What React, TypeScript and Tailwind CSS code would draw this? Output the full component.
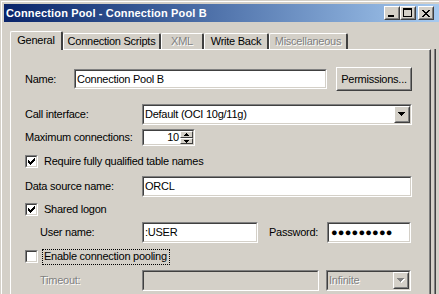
import type { ReactNode } from 'react'

const face = "font-['Liberation_Sans',Arial,sans-serif]"
const grayText = 'text-[#808080] [text-shadow:1px_1px_0_#ffffff]'

// tiny pixel-art helper for the classic glyphs (check mark, close X)
function Pixels({ rows, color = '#000' }: { rows: string[]; color?: string }) {
  const w = rows[0].length
  const h = rows.length
  return (
    <svg width={w} height={h} viewBox={`0 0 ${w} ${h}`} shapeRendering="crispEdges" className="block">
      {rows.flatMap((r, y) =>
        r.split('').map((c, x) => (c === '#' ? <rect key={`${x}-${y}`} x={x} y={y} width={1} height={1} fill={color} /> : null))
      )}
    </svg>
  )
}

const checkRows = ['......#', '.....##', '#...###', '##.###.', '#####..', '.###...', '..#....']
const closeRows = ['##....##', '.##..##.', '..####..', '...##...', '..####..', '.##..##.', '##....##']

function Sunken({ className = '', children, disabled }: { className?: string; children?: ReactNode; disabled?: boolean }) {
  return (
    <div className={`shrink-0 border border-t-[#808080] border-l-[#808080] border-b-white border-r-white ${className}`}>
      <div
        className={`h-full border border-t-[#404040] border-l-[#404040] border-b-[#d4d0c8] border-r-[#d4d0c8] flex items-center ${
          disabled ? 'bg-[#d4d0c8]' : 'bg-white'
        }`}
      >
        {children}
      </div>
    </div>
  )
}

function Raised({ className = '', children }: { className?: string; children?: ReactNode }) {
  return (
    <div className={`shrink-0 border border-t-white border-l-white border-b-[#404040] border-r-[#404040] ${className}`}>
      <div className="h-full border border-t-[#d4d0c8] border-l-[#d4d0c8] border-b-[#808080] border-r-[#808080] flex items-center justify-center bg-[#d4d0c8]">
        {children}
      </div>
    </div>
  )
}

function Arrow({ disabled }: { disabled?: boolean }) {
  return (
    <svg width="8" height="5" viewBox="0 0 8 5" shapeRendering="crispEdges" className="block">
      {disabled && <polygon points="1,1 8,1 4.5,5" fill="#ffffff" />}
      <polygon points="0,0 7,0 3.5,4" fill={disabled ? '#808080' : '#000'} />
    </svg>
  )
}

function Checkbox({ checked }: { checked?: boolean }) {
  return (
    <Sunken className="w-[13px] h-[13px]">
      <div className="w-full h-full flex items-center justify-center">{checked && <Pixels rows={checkRows} />}</div>
    </Sunken>
  )
}

function Tab({ label, w, active, disabled }: { label: string; w: string; active?: boolean; disabled?: boolean }) {
  return (
    <div
      className={`${w} shrink-0 flex items-center justify-center rounded-t-[2px] border-t border-l border-r-2 border-t-white border-l-white border-r-[#404040] bg-[#d4d0c8] ${
        active ? 'h-[19px] -mb-px relative z-10 pb-[2px]' : 'h-[16px]'
      } ${disabled ? grayText : ''}`}
    >
      {label}
    </div>
  )
}

export default function App() {
  return (
    <div className={`w-[439px] h-[294px] overflow-hidden bg-[#d4d0c8] text-black text-[11px] leading-[13px] tracking-[-0.25px] ${face}`}>
      <div className="h-full pt-px pl-px">
        <div className="h-full border-t border-l border-white pt-[2px] pl-[2px] flex flex-col">
          {/* Title bar */}
          <div className="h-[18px] shrink-0 flex items-center bg-gradient-to-r from-[#0a246a] to-[#a6caf0] pl-[2px] pr-[5px]">
            <span className="font-bold text-white tracking-[0.15px]">Connection Pool - Connection Pool B</span>
            <div className="ml-auto flex">
              <Raised className="w-[16px] h-[14px]">
                <svg width="12" height="10" viewBox="0 0 12 10" shapeRendering="crispEdges">
                  <rect x="2" y="7" width="6" height="2" fill="#000" />
                </svg>
              </Raised>
              <Raised className="w-[16px] h-[14px]">
                <svg width="12" height="10" viewBox="0 0 12 10" shapeRendering="crispEdges">
                  <rect x="1" y="0" width="9" height="2" fill="#000" />
                  <rect x="1" y="0" width="1" height="9" fill="#000" />
                  <rect x="9" y="0" width="1" height="9" fill="#000" />
                  <rect x="1" y="8" width="9" height="1" fill="#000" />
                </svg>
              </Raised>
              <Raised className="w-[16px] h-[14px] ml-[2px]">
                <Pixels rows={closeRows} />
              </Raised>
            </div>
          </div>

          {/* Body */}
          <div className="flex-1 flex pt-[9px]">
            <div className="ml-[6px] w-[421px] shrink-0 flex flex-col">
              {/* Tabs */}
              <div className="h-[18px] flex items-end">
                <Tab label="General" w="w-[53px]" active />
                <Tab label="Connection Scripts" w="w-[98px]" />
                <Tab label="XML" w="w-[43px]" disabled />
                <Tab label="Write Back" w="w-[65px]" />
                <Tab label="Miscellaneous" w="w-[79px]" disabled />
              </div>

              {/* Panel */}
              <div className="flex-1 border-t border-l border-r border-t-white border-l-white border-r-[#404040]">
                <div className="h-full border-r border-[#808080] pl-[14px] pt-[17px] flex flex-col">
                  <div className="h-[24px] flex items-center">
                    <span className="w-[49px] shrink-0">Name:</span>
                    <Sunken className="w-[253px] h-[20px]">
                      <span className="pl-[1px]">Connection Pool B</span>
                    </Sunken>
                    <Raised className="ml-[9px] w-[76px] h-[24px]">Permissions...</Raised>
                  </div>

                  <div className="mt-[13px] h-[21px] flex items-center">
                    <span className="w-[117px] shrink-0">Call interface:</span>
                    <Sunken className="w-[270px] h-[21px]">
                      <span className="pl-[1px] flex-1">Default (OCI 10g/11g)</span>
                      <Raised className="w-[16px] h-[17px]">
                        <Arrow />
                      </Raised>
                    </Sunken>
                  </div>

                  <div className="mt-[4px] h-[17px] flex items-center">
                    <span className="w-[117px] shrink-0">Maximum connections:</span>
                    <Sunken className="w-[53px] h-[17px]">
                      <span className="flex-1 text-right pr-[1px]">10</span>
                      <div className="w-[13px] h-full flex flex-col">
                        <div className="h-[7px] border border-t-white border-l-white border-b-[#404040] border-r-[#404040] bg-[#d4d0c8] flex items-center justify-center">
                          <svg width="5" height="3" viewBox="0 0 5 3" shapeRendering="crispEdges" className="block">
                            <polygon points="2.5,0 5,3 0,3" fill="#000" />
                          </svg>
                        </div>
                        <div className="h-[6px] border border-t-white border-l-white border-b-[#404040] border-r-[#404040] bg-[#d4d0c8] flex items-center justify-center">
                          <svg width="5" height="3" viewBox="0 0 5 3" shapeRendering="crispEdges" className="block">
                            <polygon points="0,0 5,0 2.5,3" fill="#000" />
                          </svg>
                        </div>
                      </div>
                    </Sunken>
                  </div>

                  <div className="mt-[9px] h-[13px] flex items-center">
                    <Checkbox checked />
                    <span className="ml-[6px]">Require fully qualified table names</span>
                  </div>

                  <div className="mt-[8px] h-[21px] flex items-center">
                    <span className="w-[117px] shrink-0">Data source name:</span>
                    <Sunken className="w-[270px] h-[21px]">
                      <span className="pl-[1px]">ORCL</span>
                    </Sunken>
                  </div>

                  <div className="mt-[6px] h-[13px] flex items-center">
                    <Checkbox checked />
                    <span className="ml-[6px]">Shared logon</span>
                  </div>

                  <div className="mt-[6px] h-[21px] flex items-center pl-[15px]">
                    <span className="w-[102px] shrink-0">User name:</span>
                    <Sunken className="w-[116px] h-[21px]">
                      <span className="pl-[1px]">:USER</span>
                    </Sunken>
                    <span className="ml-[11px] w-[58px] shrink-0">Password:</span>
                    <Sunken className="w-[84px] h-[21px]">
                      <span className="pl-[2px] text-[11px] tracking-[0.2px] leading-[13px]">●●●●●●●●●</span>
                    </Sunken>
                  </div>

                  <div className="mt-[7px] h-[13px] flex items-center">
                    <Checkbox />
                    <span className="ml-[4px] w-[128px] h-[16px] flex items-center px-px border border-dotted border-black">
                      Enable connection pooling
                    </span>
                  </div>

                  <div className="mt-[7px] h-[21px] flex items-center pl-[15px]">
                    <span className={`w-[102px] shrink-0 ${grayText}`}>Timeout:</span>
                    <Sunken className="w-[177px] h-[21px]" disabled />
                    <Sunken className="ml-[7px] w-[85px] h-[21px]" disabled>
                      <span className={`pl-[1px] flex-1 ${grayText}`}>Infinite</span>
                      <Raised className="w-[16px] h-[17px]">
                        <Arrow disabled />
                      </Raised>
                    </Sunken>
                  </div>
                </div>
              </div>
            </div>
            <div className="ml-[3px] mt-[18px] w-[2px] shrink-0 border-l border-[#808080] bg-[#404040]" />
          </div>
        </div>
      </div>
    </div>
  )
}
